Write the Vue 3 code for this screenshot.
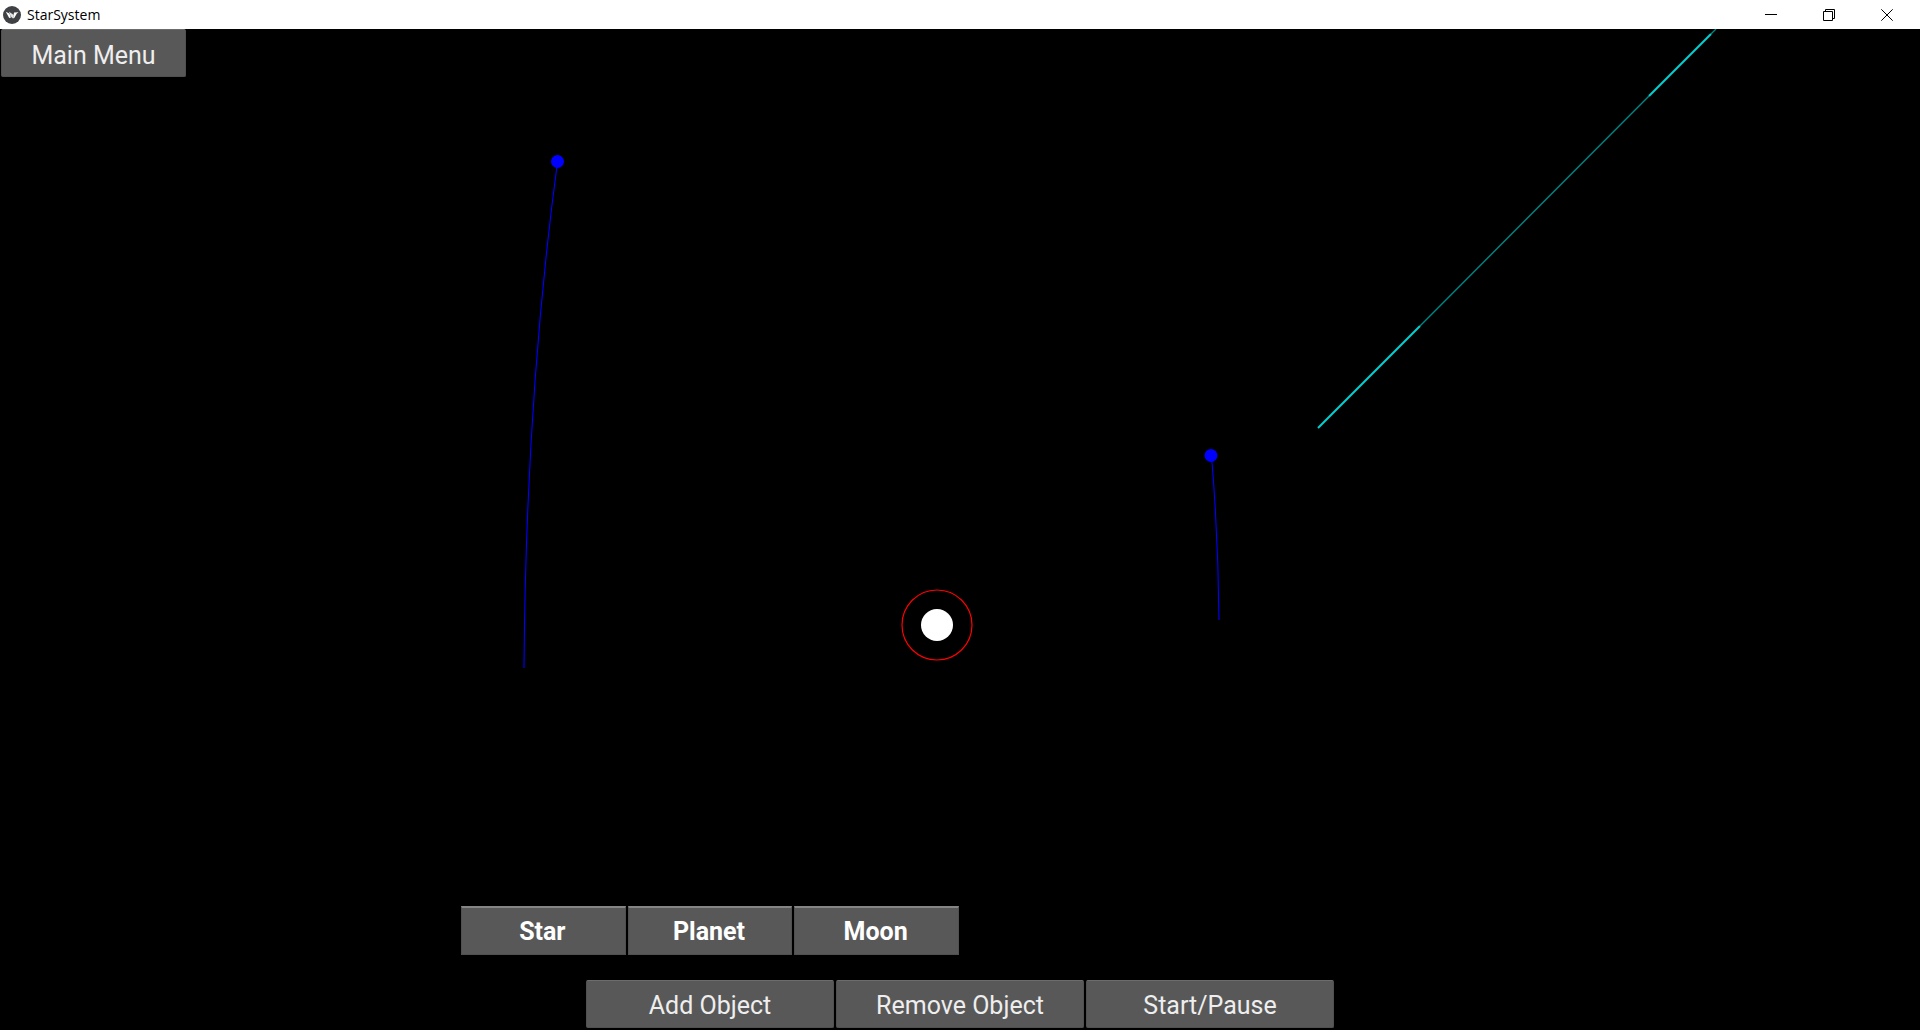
<script setup>
import { ref } from 'vue'

const bodyTypes = ['Star', 'Planet', 'Moon']
const actions = ['Add Object', 'Remove Object', 'Start/Pause']
const selected = ref('Star')
</script>

<template>
  <div class="window">
    <header class="titlebar">
      <svg class="logo" width="18" height="18" viewBox="0 0 18 18" aria-hidden="true">
        <circle cx="9" cy="9" r="9" fill="#3f4144" />
        <path d="M2.8 5.8 L6.4 7.6 L8 11.4 L6.2 12 Z" fill="#fff" />
        <path d="M6 5.8 L10.8 9 L9.6 12.6 L7.4 9.8 Z" fill="#e4e4e4" />
        <path d="M11 6.4 L15.6 6.2 L13.8 7.6 L11.4 11.8 L10 12.6 Z" fill="#fff" />
      </svg>
      <h1 class="title">StarSystem</h1>
      <div class="controls">
        <button type="button" class="control" aria-label="Minimize">
          <svg width="12" height="12" viewBox="0 0 12 12"><path d="M0 5.5H12" /></svg>
        </button>
        <button type="button" class="control" aria-label="Restore">
          <svg width="12" height="12" viewBox="0 0 12 12"><path d="M.5 2.5H9.5V11.5H.5ZM2.5 2.5V.5H11.5V9.5H9.5" /></svg>
        </button>
        <button type="button" class="control" aria-label="Close">
          <svg width="12" height="12" viewBox="0 0 12 12"><path d="M.3 .3L11.7 11.7M11.7 .3L.3 11.7" /></svg>
        </button>
      </div>
    </header>

    <main class="stage">
      <svg class="space" viewBox="0 0 1920 1001" preserveAspectRatio="xMidYMid slice" aria-hidden="true">
        <g fill="none" stroke="#0000ff" stroke-width="1.1">
          <path d="M557.5 133 Q526 366 524 639" />
          <path d="M1211.5 427 Q1218.3 507 1219 591" />
        </g>
        <g fill="#00f">
          <circle cx="557.5" cy="132.5" r="6.5" />
          <circle cx="1211" cy="426.5" r="6.5" />
        </g>
        <path d="M1420 297L1649 67M1711 5L1716 0" stroke="#008484" stroke-width="1.4" />
        <path d="M1318 399L1420 297M1649 67L1711 5" stroke="#00d0d0" stroke-width="2" />
        <circle cx="937" cy="596" r="35" fill="none" stroke="#ff0000" stroke-width="1.2" />
        <circle cx="937" cy="596" r="16" fill="#fff" />
      </svg>

      <button type="button" class="button menu">Main Menu</button>

      <div class="docks">
        <div class="types">
          <button
            v-for="type in bodyTypes"
            :key="type"
            type="button"
            class="button type"
            :aria-pressed="selected === type"
            @click="selected = type"
          >{{ type }}</button>
        </div>
        <div class="actions">
          <button v-for="action in actions" :key="action" type="button" class="button">{{ action }}</button>
        </div>
      </div>
    </main>
  </div>
</template>

<style>
body {
  margin: 0;
  background: #000;
}
</style>

<style scoped>
.window {
  display: flex;
  flex-direction: column;
  min-height: 100vh;
  font-family: Roboto, sans-serif;
}

.titlebar {
  display: flex;
  align-items: center;
  height: 29px;
  padding: 0 4px 0 3px;
  background: #fff;
}

.title {
  margin: 0 auto 0 6px;
  font: 400 14px/20px "Open Sans", sans-serif;
  color: #000;
}

.controls {
  display: flex;
}

.control {
  display: flex;
  align-items: center;
  justify-content: center;
  width: 58px;
  height: 29px;
  padding: 0;
  border: 0;
  background: none;
}

.control path {
  fill: none;
  stroke: #000;
  stroke-width: 1;
}

.stage {
  position: relative;
  display: flex;
  flex: 1;
  flex-direction: column;
  align-items: flex-start;
  justify-content: space-between;
  background: #000;
}

.space {
  position: absolute;
  inset: 0;
  width: 100%;
  height: 100%;
}

.button {
  position: relative;
  height: 48px;
  padding: 4px 0 0;
  border: 1px solid #505050;
  border-top-color: #6c6c6c;
  border-radius: 2px;
  background: #585858;
  color: #eee;
  font: 400 25px/32px Roboto, sans-serif;
}

.menu {
  width: 185px;
  margin-left: 1px;
  padding-top: 6px;
}

.docks {
  display: flex;
  flex-direction: column;
  align-items: center;
  align-self: stretch;
  gap: 25px;
  padding-bottom: 2px;
}

.types,
.actions {
  display: grid;
  grid-template-columns: repeat(3, 1fr);
  gap: 2px;
}

.types {
  width: 498px;
  margin-right: 500px;
}

.actions {
  width: 748px;
}

.type {
  height: 49px;
  padding: 2px 2px 0 0;
  border-top: 2px solid #858585;
  border-radius: 0;
  color: #fff;
  font-weight: 700;
}
</style>
